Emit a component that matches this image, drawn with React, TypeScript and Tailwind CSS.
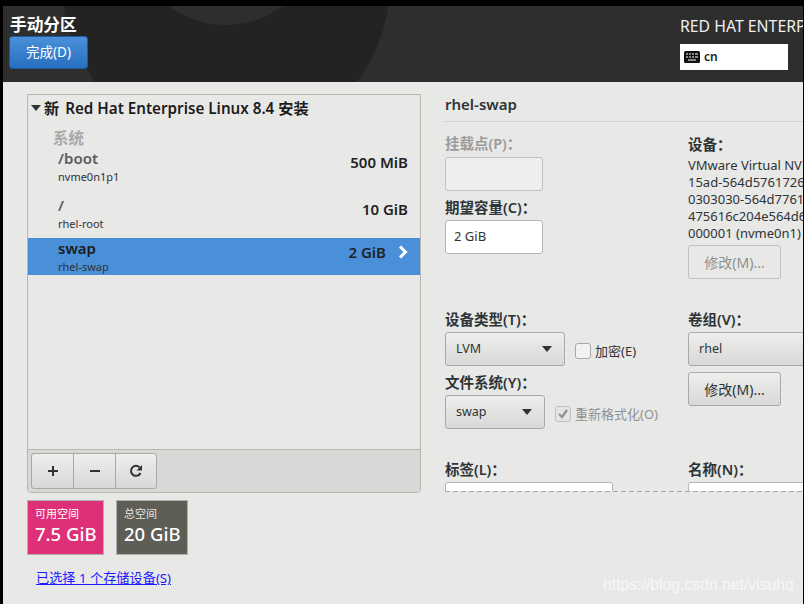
import React from "react";

const font = { fontFamily: '"Noto Sans", "Noto Sans CJK SC", sans-serif' };

function Row({ name, sub, size, selected }: { name: string; sub: string; size: string; selected?: boolean }) {
  return (
    <div className={`flex items-center h-[37px] pl-[30px] pr-[12px] ${selected ? "bg-[#4a90d9]" : ""}`}>
      <div className="flex-1 min-w-0 mb-[3px]">
        <div className={`text-[15px] leading-[22px] font-semibold ${selected ? "text-[#1c1c1c]" : "text-[#5b5b5b]"}`}>{name}</div>
        <div className="mt-[1px] text-[11px] leading-[14px] text-[#2e3436]">{sub}</div>
      </div>
      <div className="text-[15px] leading-[20px] mb-[10px] font-semibold text-[#1f2324]">{size}</div>
      {selected && (
        <svg width="10" height="14" viewBox="0 0 10 14" className="ml-[12px] mb-[10px]">
          <path d="M2 1.5 L7.5 7 L2 12.5" fill="none" stroke="#ffffff" strokeWidth="3" />
        </svg>
      )}
    </div>
  );
}

function Label({ children, className = "" }: { children: React.ReactNode; className?: string }) {
  return <div className={`text-[14.5px] leading-[20px] font-semibold whitespace-nowrap ${className || "text-[#2e3436]"}`}>{children}</div>;
}

function Combo({ text, w }: { text: string; w: string }) {
  return (
    <div className={`${w} h-[34px] shrink-0 flex items-center justify-between pl-[10px] pr-[12px] rounded-[3px] border border-[#a8a8a6] bg-gradient-to-b from-[#eeeeec] to-[#d8d8d6] text-[12.5px] text-[#2e3436]`}>
      <span>{text}</span>
      <svg width="10" height="6" viewBox="0 0 10 6"><path d="M0 0 H10 L5 6 Z" fill="#2e3436" /></svg>
    </div>
  );
}

function GradBtn({ children, disabled }: { children: React.ReactNode; disabled?: boolean }) {
  return (
    <div className={`w-[93px] h-[34px] flex items-center justify-center rounded-[3px] border text-[14px] ${disabled ? "border-[#c0c0be] bg-[#e8e8e7] text-[#8e9192]" : "border-[#a8a8a6] bg-gradient-to-b from-[#eeeeec] to-[#d8d8d6] text-[#2e3436]"}`}>
      {children}
    </div>
  );
}

export default function App() {
  return (
    <div className="w-[804px] h-[604px] bg-black pt-[6px] pl-[3px] pr-[1px] overflow-hidden" style={font}>
      <div className="w-full h-full flex flex-col overflow-hidden bg-[#e8e8e7]">
        <header className="relative h-[76px] shrink-0 bg-[#2e2e2e] overflow-hidden flex justify-between">
          <svg className="absolute left-[-3px] top-[-6px]" width="500" height="88" viewBox="0 0 500 88">
            <circle cx="226" cy="-17" r="164" fill="#232323" />
            <circle cx="226" cy="-70" r="95" fill="#2e2e2e" />
          </svg>
          <div className="relative pl-[6px] pt-[8px]">
            <div className="ml-[1px] text-[16.7px] leading-[22px] font-bold text-white">手动分区</div>
            <div className="w-[79px] h-[33px] flex items-center justify-center rounded-[3px] border border-[#1f5a9c] bg-gradient-to-b from-[#4a90d9] to-[#2570c0] text-[13.5px] text-white">完成(D)</div>
          </div>
          <div className="relative w-[123px] pt-[10px] shrink-0 overflow-hidden">
            <div className="text-[15.8px] leading-[20px] text-[#f0f0f0] whitespace-nowrap">RED HAT ENTERPRISE LINUX 8.4</div>
            <div className="mt-[8px] w-[108px] h-[26px] bg-white flex items-center pl-[4px] gap-[4px]">
              <svg width="16" height="12" viewBox="0 0 16 12">
                <rect width="16" height="12" rx="1.5" fill="#111" />
                <path d="M2 3h2M5 3h2M8 3h2M11 3h3M2 6h2M5 6h2M8 6h2M11 6h3M4 9h8" stroke="#fff" strokeWidth="1.2" />
              </svg>
              <span className="text-[12px] font-semibold text-[#1c1c1c] leading-none">cn</span>
            </div>
          </div>
        </header>

        <main className="flex-1 flex min-h-0 pl-[24px]">
          <div className="w-[394px] shrink-0 pt-[12px]">
            <div className="h-[399px] rounded-b-[4px] border border-[#b6b6b3] flex flex-col">
              <div className="flex-1 pt-[1px]">
                <div className="flex items-center h-[24px] pl-[3px] text-[15.2px] font-semibold text-[#1c1c1c] whitespace-nowrap">
                  <svg width="10" height="6" viewBox="0 0 10 6" className="mr-[3px]"><path d="M0 0H10L5 6Z" fill="#2e3436" /></svg>
                  <span className="mr-[6px]">新</span>Red Hat Enterprise Linux 8.4 安装
                </div>
                <div className="pl-[25px] mt-[8px] text-[15.5px] leading-[20px] font-semibold text-[#a9a9a9]">系统</div>
                <div>
                  <Row name="/boot" sub="nvme0n1p1" size="500 MiB" />
                  <div className="mt-[10px]"><Row name="/" sub="rhel-root" size="10 GiB" /></div>
                  <div className="mt-[6px]"><Row name="swap" sub="rhel-swap" size="2 GiB" selected /></div>
                </div>
              </div>
              <div className="h-[43px] shrink-0 border-t border-[#b6b6b3] bg-[#d8d8d6] rounded-b-[3px] pl-[3px] pt-[3px]">
                <div className="flex w-[126px] h-[36px] rounded-[3px] border border-[#a8a8a6] bg-gradient-to-b from-[#eeeeec] to-[#d8d8d6] text-[#2e3436]">
                  <div className="w-[42px] flex items-center justify-center border-r border-[#a8a8a6]">
                    <svg width="12" height="12" viewBox="0 0 12 12"><path d="M6 1v10M1 6h10" stroke="#2e3436" strokeWidth="2" /></svg>
                  </div>
                  <div className="w-[42px] flex items-center justify-center border-r border-[#a8a8a6]">
                    <svg width="12" height="12" viewBox="0 0 12 12"><path d="M1 6h10" stroke="#2e3436" strokeWidth="2" /></svg>
                  </div>
                  <div className="flex-1 flex items-center justify-center">
                    <svg width="14" height="14" viewBox="0 0 14 14"><path d="M11.5 9A5 5 0 1 1 10.5 3.3" fill="none" stroke="#2e3436" strokeWidth="2" /><path d="M13 1V6.5H7.5Z" fill="#2e3436" /></svg>
                  </div>
                </div>
              </div>
            </div>
            <div className="flex gap-[12px] mt-[7px]">
              <div className="w-[77px] h-[55px] border border-[#b0b0ae] bg-[#dd3078] text-white pl-[7px] pt-[5px]">
                <div className="text-[11px] leading-[16px]">可用空间</div>
                <div className="text-[18.5px] leading-[24px] font-medium whitespace-nowrap">7.5 GiB</div>
              </div>
              <div className="w-[72px] h-[55px] border border-[#b0b0ae] bg-[#5e5e56] text-white pl-[7px] pt-[5px]">
                <div className="text-[11px] leading-[16px] text-[#e4e4e0]">总空间</div>
                <div className="text-[18.5px] leading-[24px] font-medium whitespace-nowrap">20 GiB</div>
              </div>
            </div>
            <a className="block mt-[13px] ml-[9px] text-[13.2px] leading-[20px] text-[#1a1aff] underline">已选择 1 个存储设备(S)</a>
          </div>

          <div className="flex-1 min-w-0 ml-[24px] pt-[11px] overflow-hidden">
            <div className="h-[29px] border-b border-[#d0d0ce] text-[15px] leading-[22px] font-semibold text-[#2e3436] whitespace-nowrap">rhel-swap</div>
            <div className="h-[369px] overflow-hidden grid grid-cols-[243px_1fr]">
              <div className="pt-[11px]">
                <Label className="text-[#9a9c9c]">挂载点(P)：</Label>
                <div className="mt-[4px] w-[98px] h-[34px] rounded-[3px] border border-[#c0c0be] bg-[#eeeeec]" />
                <div className="mt-[6px]"><Label>期望容量(C)：</Label></div>
                <div className="mt-[3px] w-[98px] h-[34px] rounded-[3px] border border-[#b6b6b3] bg-white flex items-center pl-[8px] text-[13px] text-[#2e3436]">2 GiB</div>
                <div className="mt-[55px]"><Label>设备类型(T)：</Label></div>
                <div className="mt-[3px] flex items-center">
                  <Combo text="LVM" w="w-[120px]" />
                  <div className="ml-[10px] mt-[4px] w-[16px] h-[16px] rounded-[3px] border border-[#a8a8a6] bg-[#f2f2f0]" />
                  <span className="ml-[4px] mt-[6px] text-[13px] text-[#2e3436]">加密(E)</span>
                </div>
                <div className="mt-[6px]"><Label>文件系统(Y)：</Label></div>
                <div className="mt-[3px] flex items-center">
                  <Combo text="swap" w="w-[100px]" />
                  <div className="ml-[10px] mt-[4px] w-[16px] h-[16px] rounded-[3px] border border-[#c0c0be] bg-[#e4e4e2] flex items-center justify-center">
                    <svg width="12" height="12" viewBox="0 0 12 12"><path d="M2 6l3 3 5-7" fill="none" stroke="#8e9192" strokeWidth="2.2" /></svg>
                  </div>
                  <span className="ml-[4px] mt-[6px] text-[13px] text-[#8e9192] whitespace-nowrap">重新格式化(O)</span>
                </div>
                <div className="mt-[30px]"><Label>标签(L)：</Label></div>
                <div className="mt-[3px] w-[168px] h-[34px] rounded-t-[3px] border border-[#b6b6b3] bg-white" />
              </div>
              <div className="pt-[12px] min-w-0">
                <Label>设备：</Label>
                <div className="text-[13px] leading-[17px] text-[#2e3436] mt-[3px] whitespace-nowrap">
                  <div>VMware Virtual NVMe Disk</div>
                  <div>15ad-564d57617265</div>
                  <div>0303030-564d77617265</div>
                  <div>475616c204e564d65</div>
                  <div>000001 (nvme0n1)</div>
                </div>
                <div className="mt-[3px]"><GradBtn disabled>修改(M)...</GradBtn></div>
                <div className="mt-[30px]"><Label>卷组(V)：</Label></div>
                <div className="mt-[3px] w-[140px] h-[34px] flex items-center pl-[10px] rounded-[3px] border border-[#a8a8a6] bg-gradient-to-b from-[#eeeeec] to-[#d8d8d6] text-[12.5px] text-[#2e3436]"><span>rhel</span></div>
                <div className="mt-[6px]"><GradBtn>修改(M)...</GradBtn></div>
                <div className="mt-[53px]"><Label>名称(N)：</Label></div>
                <div className="mt-[3px] w-[140px] h-[34px] rounded-t-[3px] border border-[#b6b6b3] bg-white" />
              </div>
            </div>
            <div className="h-px bg-[repeating-linear-gradient(90deg,#a8a8a6_0,#a8a8a6_5px,transparent_5px,transparent_8px)]" />
            <div className="mt-[83px] ml-[158px] text-[15.75px] leading-[20px] text-[#f7f7f7] whitespace-nowrap" style={{ fontFamily: '"Liberation Sans", sans-serif' }}>https://blog.csdn.net/visuhq</div>
          </div>
        </main>
      </div>
    </div>
  );
}
